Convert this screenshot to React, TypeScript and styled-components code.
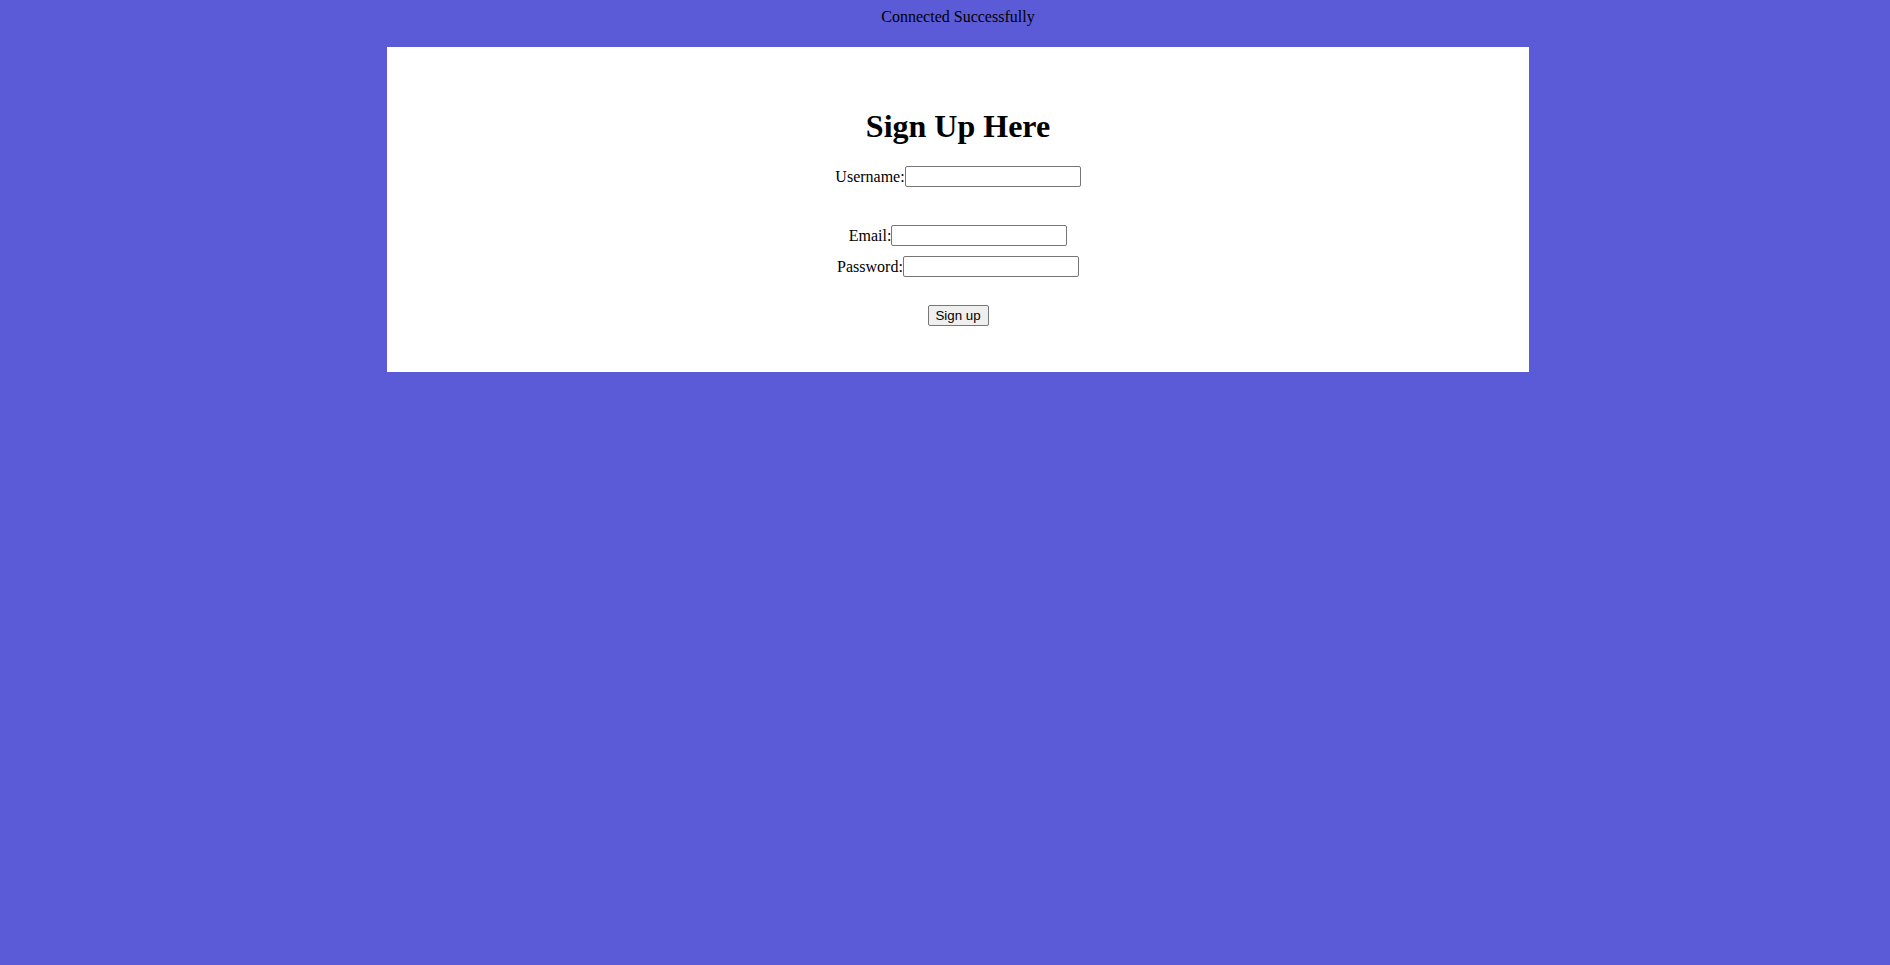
import React from "react";
import styled, { createGlobalStyle } from "styled-components";

const GlobalStyle = createGlobalStyle`
  html, body {
    background: #5b5bd7;
    min-height: 100%;
  }
  body {
    margin: 8px;
    font-family: "Liberation Serif", "Times New Roman", serif;
    font-size: 16px;
    color: #000;
  }
`;

const Page = styled.div`
  padding-left: 26px;
  text-align: center;
`;

const Status = styled.div`
  line-height: 18px;
  margin-bottom: 21px;
`;

const Card = styled.div`
  width: 1142px;
  margin: 0 auto;
  background: #ffffff;
  padding: 61px 0 46px;
  box-sizing: border-box;
  display: flex;
  flex-direction: column;
  align-items: center;
`;

const Title = styled.h1`
  margin: 0;
  font-size: 32px;
  line-height: 36px;
  font-weight: bold;
`;

const Row = styled.div<{ $gap: number }>`
  display: flex;
  align-items: center;
  justify-content: center;
  height: 21px;
  margin-top: ${(p) => p.$gap}px;
`;

const Label = styled.label`
  font-size: 16px;
  line-height: 18px;
`;

const Input = styled.input`
  width: 176px;
  height: 21px;
  box-sizing: border-box;
  margin: 0;
  padding: 1px 2px;
  border: 1px solid #767676;
  border-radius: 2px;
  background: #fff;
  font-family: "Liberation Sans", Arial, sans-serif;
  font-size: 13.33px;
`;

const Button = styled.button`
  width: 61px;
  height: 21px;
  box-sizing: border-box;
  margin: 0;
  padding: 1px 6px;
  border: 1px solid #767676;
  border-radius: 2px;
  background: #efefef;
  color: #000;
  font-family: "Liberation Sans", Arial, sans-serif;
  font-size: 13.33px;
  line-height: 17px;
`;

export default function App() {
  return (
    <>
      <GlobalStyle />
      <Page>
        <Status>Connected Successfully</Status>
        <Card>
          <Title>Sign Up Here</Title>
          <Row $gap={22}>
            <Label htmlFor="username">Username:</Label>
            <Input id="username" type="text" />
          </Row>
          <Row $gap={38}>
            <Label htmlFor="email">Email:</Label>
            <Input id="email" type="email" />
          </Row>
          <Row $gap={10}>
            <Label htmlFor="password">Password:</Label>
            <Input id="password" type="password" />
          </Row>
          <Row $gap={28}>
            <Button type="submit">Sign up</Button>
          </Row>
        </Card>
      </Page>
    </>
  );
}
